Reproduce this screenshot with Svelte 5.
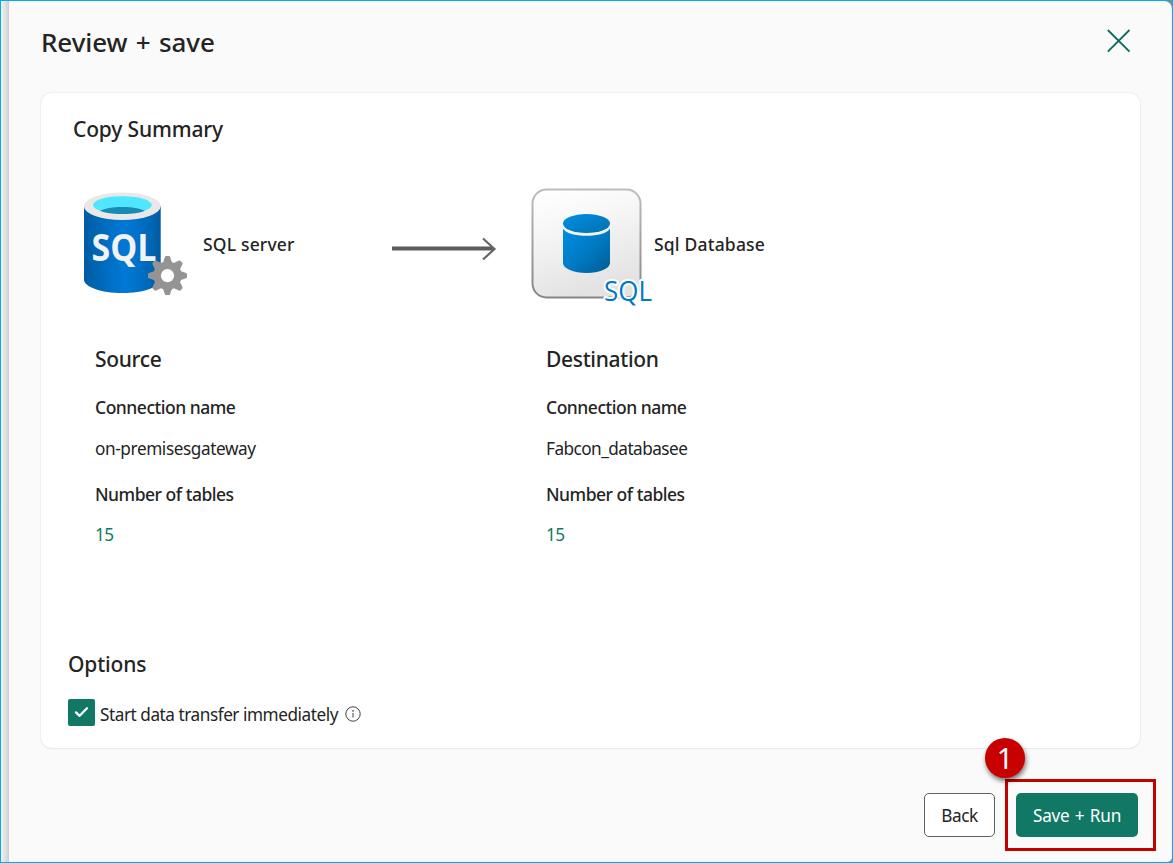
<script>
  const columns = [
    { title: 'Source', cls: 'src', name: 'on-premisesgateway', tables: 15 },
    { title: 'Destination', cls: 'dst', name: 'Fabcon_databasee', tables: 15 }
  ];
  const teeth = [0, 45, 90, 135, 180, 225, 270, 315];
</script>

<div class="frame">
  <div class="edge"></div>
  <main class="panel">
    <header>
      <h1>Review + save</h1>
      <button class="close" aria-label="Close">
        <svg width="24" height="24" viewBox="0 0 24 24"><path d="M.8 1L22.500 22.700M22.500 1L.8 22.700" stroke="#0b6a5b" stroke-width="1.800" fill="none" /></svg>
      </button>
    </header>

    <section class="card">
      <h2 class="summary">Copy Summary</h2>

      <div class="flow">
        <svg class="server" width="108" height="108" viewBox="0 0 108 108">
          <defs>
            <linearGradient id="body" x1="0" x2="1" y1="0" y2="0">
              <stop offset="0" stop-color="#005ba1" />
              <stop offset=".07" stop-color="#0060a9" />
              <stop offset=".36" stop-color="#0071c8" />
              <stop offset=".52" stop-color="#0078d4" />
              <stop offset=".64" stop-color="#0074cd" />
              <stop offset=".82" stop-color="#006abb" />
              <stop offset="1" stop-color="#005ba1" />
            </linearGradient>
          </defs>
          <path d="M2 18V91.500C2 99 19 105 40.300 105S78.700 99 78.700 91.500V18Z" fill="url(#body)" />
          <ellipse cx="40.300" cy="18.200" rx="38.400" ry="13.800" fill="#e8e8e8" />
          <ellipse cx="40.400" cy="17" rx="29.400" ry="8.800" fill="#50e6ff" />
          <path d="M18 22.800C23 20.500 31 19 40.400 19S58 20.500 62.800 22.800C58 25 50 26 40.400 26S23 25 18 22.800Z" fill="#198ab3" />
          <text x="9.500" y="73" textLength="65" lengthAdjust="spacingAndGlyphs" class="sqlbold">SQL</text>
          <g transform="translate(85.500 87.600)" fill="#949494">
            {#each teeth as a}
              <path d="M-4.800 -12L-2.600 -18.600Q-2.300 -19.500 -1.400 -19.500H1.400Q2.300 -19.500 2.600 -18.600L4.800 -12Z" transform={`rotate(${a})`} />
            {/each}
            <circle r="14.200" />
            <circle r="6.600" fill="#fff" />
          </g>
        </svg>
        <span class="label server-label">SQL server</span>
        <svg class="arrow" width="106" height="24" viewBox="0 0 106 24">
          <path d="M0 11.500H101" stroke="#5d5d5d" stroke-width="4" />
          <path d="M91 1.500L102.500 12L91 22.500" stroke="#666" stroke-width="2.200" fill="none" />
        </svg>
        <svg class="database" width="126" height="122" viewBox="0 0 126 122">
          <defs>
            <linearGradient id="tile" x1="0" y1="0" x2=".3" y2="1">
              <stop offset="0" stop-color="#fff" /><stop offset=".3" stop-color="#f9f9f9" /><stop offset="1" stop-color="#e3e3e3" />
            </linearGradient>
            <linearGradient id="rim" x1="0" y1="0" x2="0" y2="1">
              <stop offset="0" stop-color="#bdbdbd" /><stop offset="1" stop-color="#858585" />
            </linearGradient>
            <linearGradient id="blue" x1="0" y1="0" x2="1" y2="1">
              <stop offset="0" stop-color="#008ee0" /><stop offset=".5" stop-color="#007bc4" /><stop offset="1" stop-color="#005b93" />
            </linearGradient>
            <linearGradient id="lid" x1="0" y1="0" x2="1" y2="1">
              <stop offset="0" stop-color="#0090e4" /><stop offset="1" stop-color="#0070b0" />
            </linearGradient>
          </defs>
          <rect x="2.500" y="2.500" width="108" height="108" rx="14" fill="url(#tile)" stroke="url(#rim)" stroke-width="2" />
          <ellipse cx="56.500" cy="36.500" rx="23.500" ry="9.500" fill="url(#lid)" />
          <path d="M33 41.800C36 46.300 45 48.800 56.500 48.800S77 46.300 80 41.800V76C80 81.500 69.500 86 56.500 86S33 81.500 33 76Z" fill="url(#blue)" />
          <text x="74" y="113.500" textLength="48" lengthAdjust="spacingAndGlyphs" class="sqllight">SQL</text>
        </svg>
        <span class="label db-label">Sql Database</span>
      </div>

      <div class="details">
        {#each columns as col}
          <div class={`col ${col.cls}`}>
            <h2>{col.title}</h2>
            <h3 class="conn">Connection name</h3>
            <p class="name">{col.name}</p>
            <h3 class="num">Number of tables</h3>
            <a class="count" href="#tables">{col.tables}</a>
          </div>
        {/each}
      </div>

      <div class="options">
        <h2>Options</h2>
        <div class="check">
          <span class="box">
            <svg width="27" height="27" viewBox="0 0 27 27"><path d="M8 13.400L11.600 16.800L19 9.300" stroke="#fff" stroke-width="2.300" fill="none" stroke-linecap="round" stroke-linejoin="round" /></svg>
          </span>
          <span class="check-label">Start data transfer immediately</span>
          <svg class="info" width="16" height="16" viewBox="0 0 16 16">
            <circle cx="8" cy="8" r="7.200" fill="none" stroke="#424242" stroke-width="1" />
            <circle cx="8" cy="4.900" r=".8" fill="#424242" />
            <path d="M8 7V11.500" stroke="#424242" stroke-width="1" />
          </svg>
        </div>
      </div>
    </section>

    <footer>
      <button class="btn back">Back</button>
      <div class="save-wrap">
        <button class="btn save">Save + Run</button>
        <span class="marker"></span>
        <span class="badge">1</span>
      </div>
    </footer>
  </main>
</div>

<style>
  :global(body) { margin: 0; }
  * { box-sizing: border-box; }
  .frame {
    display: flex;
    width: 1173px;
    height: 863px;
    border: 1px solid #00adef;
    background: #8a8a8a;
    overflow: hidden;
    color: #242424;
    font: 17.2px/24px "Noto Sans", "Open Sans", sans-serif;
  }
  .edge { flex: 0 0 8px; background: linear-gradient(90deg, #f1f1f1, #e4e4e4 45%, #cdcdcd); }
  .panel {
    flex: 1;
    display: flex;
    flex-direction: column;
    background: #fafafa;
    border-radius: 0 8px 5px 0;
  }
  header {
    display: flex;
    justify-content: space-between;
    height: 92px;
    padding: 23px 41px 0 32px;
  }
  h1, h2, h3, p { margin: 0; }
  h1 { font-size: 26px; line-height: 36px; font-weight: 500; letter-spacing: -.1px; word-spacing: 1.8px; }
  h2 { font-size: 21px; line-height: 30px; font-weight: 500; letter-spacing: -.15px; }
  h3, .label { font-size: 17.5px; line-height: 24px; font-weight: 500; letter-spacing: -.48px; }
  .close { width: 24px; height: 24px; margin-top: 5px; padding: 0; border: 0; background: none; }
  svg { display: block; flex: none; }
  .card {
    display: flex;
    flex-direction: column;
    width: 1099px;
    height: 655px;
    margin-left: 32px;
    background: #fff;
    border-radius: 11px;
    box-shadow: 0 0 2px rgba(0, 0, 0, .14), 0 1px 2px rgba(0, 0, 0, .04);
  }
  .summary { margin: 21px 0 0 32px; }
  .flow { display: flex; height: 118px; margin-top: 43px; padding-left: 41px; white-space: nowrap; }
  .server { margin-top: 1px; }
  .server-label { width: 176px; margin: 45px 0 0 13px; letter-spacing: .18px; }
  .arrow { margin: 50px 0 0 13px; }
  .database { margin: 0 0 0 32px; }
  .db-label { margin: 45px 0 0 -2px; letter-spacing: .2px; }
  .sqlbold { font: 700 37px "Open Sans", sans-serif; fill: #f2f2f2; }
  .sqllight {
    font: 400 27px "Open Sans", sans-serif;
    fill: #0078c8;
    stroke: #fff;
    stroke-width: 4px;
    stroke-linejoin: round;
    paint-order: stroke;
  }
  .details { display: grid; grid-template-columns: 451px 400px; margin: 39px 0 0 54px; }
  .details h2 { letter-spacing: -.32px; }
  .col { display: flex; flex-direction: column; align-items: flex-start; }
  .conn { margin-top: 21px; }
  .name { margin-top: 18px; letter-spacing: -.4px; }
  .num { margin-top: 21px; }
  .dst .name { letter-spacing: -.54px; }
  .count { margin-top: 17px; color: #117865; text-decoration: none; letter-spacing: -.6px; }
  .options { margin: auto 0 22px 27px; }
  .check { display: flex; margin-top: 20px; height: 27px; }
  .box { width: 27px; height: 27px; border-radius: 2px; background: #117865; }
  .check-label { width: 240px; margin: 4px 0 0 5px; letter-spacing: -.46px; white-space: nowrap; }
  .info { margin: 7px 0 0 5px; }
  footer { display: flex; justify-content: flex-end; gap: 21px; margin-top: 45px; padding-right: 34px; }
  .btn {
    display: block;
    height: 44px;
    padding: 2px 0 0;
    border-radius: 5px;
    font: 17.2px/24px "Noto Sans", "Open Sans", sans-serif;
  }
  .back { width: 71px; border: 1px solid #616161; background: #fff; color: #242424; letter-spacing: -.45px; }
  .save-wrap { position: relative; }
  .save { width: 122px; border: 0; background: #117865; color: #fff; letter-spacing: -.2px; word-spacing: 1px; }
  .marker { position: absolute; left: -11px; top: -14px; width: 151px; height: 72px; border: 3px solid #c40000; }
  .badge {
    position: absolute;
    left: -31px;
    top: -55px;
    width: 40px;
    height: 40px;
    border-radius: 50%;
    background: #c80000;
    color: #fff;
    font: 29px/39px "Noto Sans", sans-serif;
    text-align: center;
    box-shadow: 1px 3px 5px rgba(0, 0, 0, .55);
  }
</style>
